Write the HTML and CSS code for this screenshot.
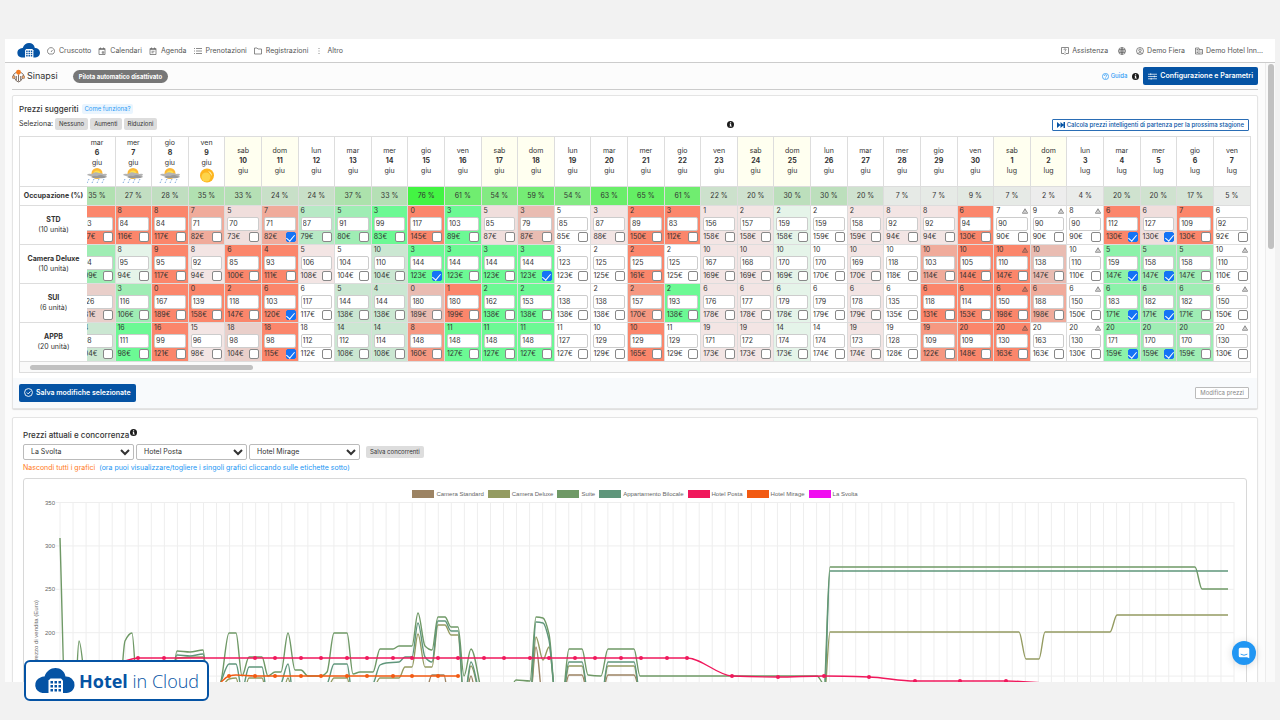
FILE: index.html
```html
<!DOCTYPE html>
<html lang="it">
<head>
  <meta charset="UTF-8">
  <meta name="viewport" content="width=device-width, initial-scale=1.0">
  <title>Sinapsi - Hotel in Cloud</title>
  <link rel="stylesheet" href="styles.css">
</head>
<body>

<svg class="defs" width="0" height="0" aria-hidden="true">
  <symbol id="cloud" viewBox="0 0 40 26">
    <path fill="#0553a4" d="M8 25a8 8 0 0 1-2-15.500 6 6 0 0 1 4-1C12 3 16 0 21 0s9 3 10 8.500a8.500 8.500 0 0 1 9 8.500c0 4-3 8-8 8z"/>
    <path fill="#fff" d="M14 26V12.500l2-2h10.500l2 2V26z"/>
    <path fill="#0553a4" d="M16 13h2.500v2.500H16zM20 13h2.500v2.500H20zM24 13h2.500v2.500H24zM16 17h2.500v2.500H16zM20 17h2.500v2.500H20zM24 17h2.500v2.500H24zM16 21h2.500v2.500H16zM20 21h2.500v2.500H20zM24 21h2.500v2.500H24z"/>
  </symbol>
  <symbol id="info" viewBox="0 0 16 16">
    <circle cx="8" cy="8" r="8" fill="#1b1b1b"/>
    <path fill="#fff" d="M7 3h2.500v2H7zM6 6.500h3.500V11H11v1.500H6V11h1V8H6z"/>
  </symbol>
  <symbol id="help" viewBox="0 0 16 16">
    <circle cx="8" cy="8" r="7" fill="none" stroke="currentColor" stroke-width="1.800"/>
    <path d="M5.500 6.500a2.500 2.500 0 1 1 3.500 2.200q-1 .5-1 1.300M8 11.500v1.500" fill="none" stroke="currentColor" stroke-width="1.800"/>
  </symbol>
  <symbol id="rain" viewBox="0 0 22 16">
    <circle cx="11" cy="5.500" r="5.500" fill="#fdb937"/>
    <circle cx="11" cy="6" r="3.500" fill="#fde04c"/>
    <path fill="#b4b4b4" d="M1 7q1-2 5-1 3-3 7-1 3 0 4 1 4-1 4 1-2 2-7 1-7 2-13-1z"/>
    <path fill="#999" d="M5 9q3-2 6-1 4-2 7 0 3 0 3 1-4 2-8 1-5 1-8-1z"/>
    <path stroke="#7ba7dc" stroke-width="1" stroke-dasharray="1.500 1.500" d="M3 11l-2 4M8 11l-2 4M13 11l-2 4M18 11l-2 4"/>
  </symbol>
  <symbol id="sun" viewBox="0 0 22 16">
    <circle cx="11" cy="7.500" r="7" fill="#fdb51f"/>
    <circle cx="10" cy="9" r="4.500" fill="#fdd44a"/>
    <path fill="#fff3b0" d="M12 3q4 1 4 5-2-3-4-5z"/>
  </symbol>
</svg>

<div class="app">
  <nav class="navbar">
    <svg class="brand"><use href="#cloud"/></svg>
    <a href="#"><svg viewBox="0 0 16 16"><path d="M4 14a7 7 0 1 1 8 0zM8 10l3-4"/></svg>Cruscotto</a>
    <a href="#"><svg viewBox="0 0 16 16"><path d="M2 3h12v12H2zM2 5h12M5 1v3M11 1v3M8.500 9.500h3v3h-3z"/></svg>Calendari</a>
    <a href="#"><svg viewBox="0 0 16 16"><path d="M2 3h12v12H2zM2 5h12M5 1v3M11 1v3M5 8.500h6M5 11.500h4"/></svg>Agenda</a>
    <a href="#"><svg viewBox="0 0 16 16"><path d="M0 3h2M4 3h12M0 8h2M4 8h12M0 13h2M4 13h12"/></svg>Prenotazioni</a>
    <a href="#"><svg viewBox="0 0 16 16"><path d="M1 14V2h5l2 2h7v10z"/></svg>Registrazioni</a>
    <a href="#"><svg viewBox="0 0 16 16"><path d="M8 2v2M8 7v2M8 12v2"/></svg>Altro</a>
    <a href="#" class="push"><svg viewBox="0 0 16 16"><path d="M1 1h14v12h-5l-2 2-2-2H1zM6 5.500q0-2 2-2t2 2q0 1-2 2V9M8 10v1.500"/></svg>Assistenza</a>
    <a href="#" aria-label="Lingua"><svg viewBox="0 0 16 16"><path d="M8 1a7 7 0 1 0 0 14A7 7 0 1 0 8 1zM1 8h14M2 5h12M2 11h12M8 1q-4 7 0 14M8 1q4 7 0 14"/></svg></a>
    <a href="#"><svg viewBox="0 0 16 16"><path d="M8 1a7 7 0 1 0 0 14A7 7 0 1 0 8 1zM8 4a2.500 2.500 0 1 0 0 5 2.500 2.500 0 1 0 0-5zM3 13q5-4 10 0"/></svg>Demo Fiera</a>
    <a href="#"><svg viewBox="0 0 16 16"><path d="M1 2h7v12H1zM8 5h7v9H8M3 5h3M3 8h3M3 11h3M11 8h2M11 11h2"/></svg>Demo Hotel Inn...</a>
  </nav>

  <div class="viewport">
    <main class="content">
      <header class="page-head">
        <svg class="sinapsi" viewBox="0 0 24 24"><g fill="none" stroke="#6b5a50" stroke-width="1.600"><path d="M12 9v13M8 5L3 9v3M16 5l5 4v3M4 15l4 6 4 2 4-2 4-6M8 12v8M16 12v8"/></g><circle cx="12" cy="5" r="4.500" fill="#f47b20"/><circle cx="3" cy="14" r="2.800" fill="#f6a96c" stroke="#6b5a50"/><circle cx="21" cy="14" r="2.800" fill="#f6a96c" stroke="#6b5a50"/></svg>
        <h1>Sinapsi</h1>
        <span class="pill">Pilota automatico disattivato</span>
        <a href="#" class="guide"><svg><use href="#help"/></svg>Guida</a>
        <svg class="info"><use href="#info"/></svg>
        <button class="btn" type="button"><svg viewBox="0 0 20 16"><path d="M0 3h20M0 8h20M0 13h20M6 1v4M14 6v4M7 11v4"/></svg>Configurazione e Parametri</button>
      </header>

      <section class="card">
        <div class="card-body">
          <div class="title-row">
            <h2>Prezzi suggeriti</h2>
            <a href="#" class="how">Come funziona?</a>
          </div>
          <div class="select-row">
            <span>Seleziona:</span>
            <button class="chip" type="button">Nessuno</button>
            <button class="chip" type="button">Aumenti</button>
            <button class="chip" type="button">Riduzioni</button>
            <svg class="info season-info"><use href="#info"/></svg>
            <button class="btn-outline season" type="button"><svg viewBox="0 0 16 12"><path d="M0 0l7 6-7 6zM7 0l7 6-7 6zM13 0h3v12h-3z"/></svg>Calcola prezzi intelligenti di partenza per la prossima stagione</button>
          </div>
          <div class="table-box">
            <table class="prices" id="prices"></table>
            <div class="hbar"><div class="hbar-thumb"></div></div>
          </div>
        </div>
        <footer class="card-foot">
          <button class="btn" type="button"><svg viewBox="0 0 16 16"><path d="M8 1a7 7 0 1 0 0 14A7 7 0 1 0 8 1zM5 8l2.500 2.500L11.500 6"/></svg>Salva modifiche selezionate</button>
          <button class="btn-outline muted" type="button">Modifica prezzi</button>
        </footer>
      </section>

      <section class="card compare">
        <h2>Prezzi attuali e concorrenza<svg class="info"><use href="#info"/></svg></h2>
        <div class="rivals">
          <select aria-label="Concorrente 1"><option>La Svolta</option></select>
          <select aria-label="Concorrente 2"><option>Hotel Posta</option></select>
          <select aria-label="Concorrente 3"><option>Hotel Mirage</option></select>
          <button class="chip" type="button">Salva concorrenti</button>
        </div>
        <p class="hint"><a href="#">Nascondi tutti i grafici</a><span>(ora puoi visualizzare/togliere i singoli grafici cliccando sulle etichette sotto)</span></p>
        <div class="chart">
          <div class="legend" id="legend"></div>
          <svg id="plot" viewBox="24 499 1222 190"></svg>
        </div>
      </section>
    </main>
    <div class="vbar"><div class="vbar-thumb"></div></div>
  </div>

  <button class="chat" type="button" aria-label="Chat"><svg viewBox="0 0 16 16"><path fill="#fff" d="M3 1h10q2 0 2 2v12l-3-1.500H3q-2 0-2-2V3q0-2 2-2z"/><path fill="none" stroke="#2196f3" stroke-width="1.200" d="M3.500 9.500q4.500 3 9 0"/></svg></button>
</div>

<div class="badge"><svg><use href="#cloud"/></svg><span><b>Hotel</b> in Cloud</span></div>

<script src="script.js"></script>
</body>
</html>
```

FILE: styles.css
```css
* {
  box-sizing: border-box;
}
body {
  display: flex;
  height: 100vh;
  margin: 0;
  padding: 39px 5px 38px;
  background: #f2f2f2;
  color: #333;
  font-family: Inter, "Liberation Sans", sans-serif;
  font-size: 7px;
  line-height: 10px;
}
.defs {
  position: absolute;
}
a {
  color: inherit;
  text-decoration: none;
}
button, input, select {
  font: inherit;
  color: inherit;
}
h1, h2 {
  margin: 0;
  font-size: 8px;
  font-weight: 500;
  line-height: 12px;
}
.app {
  position: relative;
  display: flex;
  flex: 1;
  flex-direction: column;
  min-width: 0;
  background: #fcfcfc;
}

/* top bar */
.navbar {
  display: flex;
  align-items: center;
  gap: 7px;
  height: 24px;
  padding: 0 12px;
  background: #fff;
  border-bottom: 1px solid #ccc;
  color: #555;
}
.navbar a {
  display: flex;
  align-items: center;
  gap: 4px;
}
.navbar a svg {
  width: 8px;
  height: 8px;
  fill: none;
  stroke: #666;
  stroke-width: 1.5;
}
.navbar .brand {
  width: 23px;
  height: 15px;
}
.navbar .push {
  margin-left: auto;
}
.navbar .push, .navbar .push ~ a {
  gap: 3px;
}
.navbar .push ~ a {
  margin-left: 3px;
}

/* scrolling area */
.viewport {
  display: flex;
  flex: 1;
  min-height: 0;
}
.content {
  flex: 1;
  min-width: 0;
  padding: 0 7px;
  overflow: hidden;
}
.vbar {
  width: 10px;
  padding: 1px 2px;
  background: #fafafa;
  border-left: 1px solid #ececec;
}
.vbar-thumb {
  width: 6px;
  height: 30%;
  background: #c1c1c1;
  border-radius: 3px;
}
.page-head {
  display: flex;
  align-items: center;
  height: 27px;
  margin-bottom: 5px;
  border-bottom: 1px solid #ccc;
}
.sinapsi {
  width: 13px;
  height: 14px;
  margin-right: 2px;
}
.page-head h1 {
  font-size: 9px;
  font-weight: 400;
}
.pill {
  margin-left: 15px;
  padding: 1px 6px;
  border-radius: 7px;
  background: #777;
  color: #fff;
  font-size: 6px;
  font-weight: 700;
  line-height: 11px;
}
.guide {
  display: flex;
  align-items: center;
  gap: 2px;
  margin: 0 5px 0 auto;
  color: #2f9bf5;
  font-size: 6px;
  font-weight: 500;
}
.guide svg, .info {
  width: 7px;
  height: 7px;
}
.page-head .info {
  margin-right: 4px;
}
.btn {
  display: flex;
  align-items: center;
  gap: 3px;
  height: 18px;
  padding: 0 5px;
  border: 0;
  border-radius: 2px;
  background: #0553a4;
  color: #fff;
  font-weight: 600;
}
.btn svg {
  width: 9px;
  height: 9px;
  fill: none;
  stroke: #fff;
  stroke-width: 1.6;
}

/* cards */
.card {
  margin-bottom: 8px;
  background: #fff;
  border: 1px solid #e4e4e4;
  border-radius: 2px;
  box-shadow: 0 1px 1px #ddd;
}
.card-body {
  padding: 6px 6px 5px;
}
.title-row {
  display: flex;
  align-items: center;
  gap: 4px;
  height: 14px;
}
.how {
  padding: 0 2px;
  border-radius: 2px;
  background: #eaf5fe;
  color: #2f9bf5;
  font-size: 6px;
}
.select-row {
  display: flex;
  align-items: center;
  gap: 2px;
  height: 16px;
  margin-bottom: 4px;
}
.chip {
  height: 12px;
  padding: 0 4px;
  border: 0;
  border-radius: 2px;
  background: #ddd;
  font-size: 6px;
}
.season-info {
  margin-left: auto;
}
.btn-outline {
  display: flex;
  align-items: center;
  gap: 2px;
  height: 12px;
  padding: 0 4px;
  border: 1px solid #2a6db5;
  border-radius: 1px;
  background: #fff;
  color: #0553a4;
  font-size: 6px;
}
.btn-outline svg {
  width: 8px;
  height: 6px;
  fill: #0553a4;
}
.season {
  margin: 2px 2px 0 316px;
  font-weight: 500;
}
.card-foot {
  display: flex;
  align-items: center;
  justify-content: space-between;
  height: 30px;
  padding: 0 8px 0 6px;
  background: #f8fafc;
}
.btn-outline.muted {
  border-color: #bbb;
  color: #888;
}

/* price table */
.table-box {
  border: 1px solid #ddd;
}
.prices {
  width: 100%;
  border-collapse: collapse;
  table-layout: fixed;
  text-align: center;
}
.prices th, .prices td {
  padding: 0;
  border: 1px solid #ddd;
  border-width: 0 0 1px 1px;
  font-weight: 400;
  overflow: hidden;
}
.prices .label {
  width: 67px;
  border-left: 0;
}
.prices .label b {
  display: block;
}
.prices .cut {
  width: 28px;
  border-left: 0;
}
/* first day is partly scrolled under the labels */
.cut > div {
  width: 36px;
  margin-left: -8px;
}
.prices thead th {
  height: 49px;
}
.prices thead b, .prices thead span {
  display: block;
}
.prices thead svg {
  display: block;
  width: 22px;
  height: 16px;
  margin: 0 auto;
}
.weekend {
  background: #fffff0;
}
.occ th, .occ td {
  height: 19px;
}
.day {
  padding: 0 2px;
  text-align: left;
}
.day label, .day .count {
  display: flex;
  align-items: center;
  justify-content: space-between;
  height: 13px;
}
.day .count {
  height: 11px;
}
.day .count svg {
  width: 6px;
  height: 6px;
  fill: none;
  stroke: #444;
  stroke-width: 1.6;
}
.day input {
  display: block;
  margin: 0;
  border: 1px solid #ccc;
  background: #fff;
}
.day input[type="text"] {
  width: 100%;
  height: 14px;
  padding: 0 0 0 1px;
  border-radius: 2px;
}
.day input[type="checkbox"] {
  width: 10px;
  height: 10px;
  border: 1px solid #888;
  border-radius: 2px;
  appearance: none;
}
.day input[type="checkbox"]:checked {
  border-color: #1473f5;
  background: #1473f5;
}
.day input[type="checkbox"]:checked::after {
  content: "";
  display: block;
  width: 4px;
  height: 7px;
  margin: 0 auto;
  border: solid #fff;
  border-width: 0 1px 1px 0;
  transform: rotate(40deg);
}
.hbar {
  height: 10px;
  padding: 3px 10px;
  background: #fafafa;
}
.hbar-thumb {
  width: 18.4%;
  height: 5px;
  background: #c1c1c1;
  border-radius: 3px;
}

/* competitors */
.compare {
  padding: 11px 10px;
}
.compare h2 {
  display: flex;
  gap: 1px;
}
.rivals {
  display: flex;
  align-items: center;
  gap: 2px;
  margin: 3px 0;
}
.rivals select {
  width: 111px;
  height: 16px;
  padding: 0 3px;
  border: 1px solid #bbb;
  border-radius: 2px;
  background: #fff;
}
.rivals .chip {
  margin-left: 4px;
}
.hint {
  display: flex;
  gap: 4px;
  margin: 0 0 5px;
  color: #2196f3;
}
.hint a {
  color: #ff7a1a;
}
.chart {
  padding-top: 10px;
  border: 1px solid #d8d8d8;
  border-radius: 3px;
}
.legend {
  display: flex;
  justify-content: center;
  gap: 4px;
  height: 10px;
  font-family: "Liberation Sans", sans-serif;
  font-size: 6px;
  color: #666;
}
.legend span {
  display: flex;
  align-items: center;
  gap: 2px;
}
.legend i {
  width: 22px;
  height: 8px;
}
#plot {
  display: block;
  width: 100%;
}
#plot text {
  fill: #666;
  font: 6px "Liberation Sans", sans-serif;
  text-anchor: end;
}
.grid {
  stroke: #eee;
}
.series {
  fill: none;
  stroke-width: 1.4;
}

/* floating items */
.chat {
  position: absolute;
  right: 19px;
  bottom: 17px;
  width: 24px;
  height: 24px;
  padding: 6px;
  border: 0;
  border-radius: 50%;
  background: #2196f3;
  box-shadow: 0 1px 8px rgba(0, 0, 0, 0.15);
}
.chat svg {
  display: block;
}
.badge {
  position: absolute;
  left: 24px;
  bottom: 19px;
  display: flex;
  align-items: center;
  gap: 4px;
  height: 41px;
  padding: 0 8px;
  background: #fff;
  border: 2px solid #0553a4;
  border-radius: 6px;
  color: #0553a4;
  font-family: "Open Sans", "Noto Sans", sans-serif;
  font-size: 18px;
  font-weight: 300;
  line-height: 24px;
}
.badge b {
  font-weight: 700;
}
.badge svg {
  width: 41px;
  height: 26px;
}
```

FILE: script.js
```js
var weekdays = ['lun', 'mar', 'mer', 'gio', 'ven', 'sab', 'dom'];
var weather = ['rain', 'rain', 'rain', 'sun'];
var occupancy = [35, 27, 28, 35, 33, 24, 24, 37, 33, 76, 61, 54, 59, 54, 63, 65, 61, 22, 20, 30, 30, 20, 7, 7, 9, 7, 2, 4, 20, 20, 17, 5];

// cell background: R..l increases, G..n reductions, W unchanged
var shades = {
  R: '#fb866b', r: '#f69881', P: '#f0ab9b', p: '#e9bcb2', L: '#e9cfca', q: '#f0dedc', l: '#f3e5e4',
  G: '#6cf994', g: '#8cf2aa', H: '#9fedb4', M: '#b7e9c5', m: '#cbe7d2', n: '#e5f4e9', W: '#fff'
};

// rooms left, price, suggested price, shade, * selected, ! warning
var rooms = [
  ['STD', 10, '9 93 117 R,8 84 116 R,8 84 117 R,7 71 82 P,5 70 73 q,7 71 82 P*,6 87 79 M,5 91 80 H,3 99 83 G,0 117 145 R,3 103 89 G,5 85 87 q,3 79 87 p,5 85 85 W,3 87 88 l,2 89 150 R,3 83 112 R,1 156 158 l,2 157 158 l,2 159 158 n,2 159 159 W,2 158 159 l,8 92 94 l,8 92 94 l,6 94 130 R,7 90 90 W!,9 90 90 W!,8 90 90 W!,6 112 130 R*,6 127 130 q*,7 109 130 R,6 92 92 W'],
  ['Camera Deluxe', 10, '7 94 109 H,8 95 94 n,9 95 117 R,8 92 94 l,6 85 100 R,4 93 111 R,5 106 108 l,5 104 104 W,10 110 104 m,3 144 123 G*,3 144 123 G,3 144 123 G,3 144 123 G*,3 123 123 W,2 125 125 W,2 125 161 R,2 125 125 W,10 167 169 l,10 168 169 l,10 170 169 n,10 170 170 W,10 169 170 l,10 118 118 W,10 103 114 P,10 105 144 R,10 110 147 R!,10 138 147 p,10 110 110 W!,5 159 147 g*,5 158 147 H*,5 158 147 H,10 110 110 W!'],
  ['SUI', 6, '4 126 131 L,3 116 106 H,0 167 189 R,0 139 158 R,2 118 147 R,6 103 120 R*,6 117 117 W,5 144 138 m,4 144 138 m,0 180 189 p,1 180 199 R,2 162 138 G,2 153 138 G,2 138 138 W,2 138 138 W,2 157 170 r,2 193 138 G,6 176 178 l,6 177 178 l,6 179 178 n,6 179 179 W,6 178 179 l,6 135 135 W,6 118 131 R,6 114 153 R,6 150 198 R!,6 188 198 P,6 150 150 W!,6 183 171 g*,6 182 171 H*,6 182 171 H,6 150 150 W!'],
  ['APPB', 20, '14 98 104 m,16 111 98 G,16 99 121 R,15 96 98 l,18 98 104 L,18 98 115 R*,18 112 112 W,14 112 108 m,14 114 108 m,8 148 160 r,11 148 127 G,11 148 127 G,11 148 127 G,11 127 127 W,10 129 129 W,10 129 165 R,11 129 129 W,19 171 173 l,19 172 173 l,14 174 173 n,14 174 174 W,19 173 174 l,19 128 128 W,19 109 122 r,20 109 148 R,20 130 163 R!,20 163 163 W,20 130 130 W!,20 171 159 g*,20 170 159 H*,20 170 159 H,20 130 130 W!']
];

function occColor(v) {
  var rb = Math.round(240 - 1.4 * v - 0.0115 * v * v);
  var g = Math.round(Math.max(238 - 0.6 * v, 209 + 0.46 * v));
  return 'rgb(' + rb + ',' + g + ',' + rb + ')';
}

function buildTable() {
  var html = '<thead><tr><th class="label"></th>';
  occupancy.forEach(function(v, i) {
    var day = i < 25 ? i + 6 : i - 24;
    var wd = weekdays[(i + 1) % 7];
    var cls = (i === 0 ? 'cut' : '') + (wd === 'sab' || wd === 'dom' ? 'weekend' : '');
    html += '<th class="' + cls + '"><div><span>' + wd + '</span><b>' + day + '</b><span>' + (i < 25 ? 'giu' : 'lug') + '</span>' +
      (weather[i] ? '<svg><use href="#' + weather[i] + '"/></svg>' : '') + '</div></th>';
  });
  html += '</tr></thead><tbody><tr class="occ"><th class="label"><b>Occupazione (%)</b></th>';
  occupancy.forEach(function(v, i) {
    html += '<td class="' + (i === 0 ? 'cut' : '') + '" style="background:' + occColor(v) + '"><div>' + v + ' %</div></td>';
  });
  html += '</tr>';
  rooms.forEach(function(room) {
    html += '<tr><th class="label"><b>' + room[0] + '</b>(' + room[1] + ' unità)</th>';
    room[2].split(',').forEach(function(cell, i) {
      var c = cell.split(' ');
      html += '<td class="' + (i === 0 ? 'cut' : '') + '" style="background:' + shades[c[3][0]] + '"><div class="day">' +
        '<div class="count">' + c[0] + (c[3][1] === '!' ? '<svg viewBox="0 0 16 16"><path d="M8 2l7 12H1zM8 6v4M8 11v2"/></svg>' : '') + '</div>' +
        '<input type="text" aria-label="Prezzo ' + room[0] + '" value="' + c[1] + '">' +
        '<label>' + c[2] + '€<input type="checkbox"' + (c[3][1] === '*' ? ' checked' : '') + '></label></div></td>';
    });
    html += '</tr>';
  });
  document.getElementById('prices').innerHTML = html + '</tbody>';
}

var series = [
  { name: 'Camera Standard', color: '#9c8363', points: [[425,700],[432,675],[444,675],[449,700],[465,700],[471,676],[477,700],[530,700],[536,647],[543,700],[562,700],[569,675],[582,675],[589,700],[601,700],[608,675],[634,675],[641,700]] },
  { name: 'Camera Deluxe', color: '#949b61', points: [[170,700],[177,658],[203,657],[210,700],[220,690],[229,679],[236,678],[242,700],[249,678],[262,678],[268,700],[281,700],[288,678],[294,700],[327,690],[334,678],[347,678],[353,700],[373,690],[380,678],[399,678],[405,667],[412,667],[418,634],[425,667],[432,667],[438,625],[445,625],[451,635],[458,635],[464,700],[471,666],[482,700],[530,700],[536,637],[543,660],[549,647],[556,700],[562,700],[569,666],[582,666],[589,700],[601,700],[608,666],[634,666],[641,700],[824,700],[830,632],[1019,632],[1026,659],[1039,659],[1045,632],[1110,632],[1117,615],[1228,615]] },
  { name: 'Suite', color: '#6f9966', points: [[60,538],[66,720],[75,700],[79,641],[88,700],[119,700],[125,641],[132,633],[138,700],[170,700],[177,651],[190,652],[203,650],[208,690],[220,684],[229,633],[236,633],[242,676],[249,657],[262,657],[268,676],[275,672],[281,672],[288,633],[295,670],[301,670],[308,676],[321,676],[327,672],[334,633],[347,633],[353,674],[360,672],[373,672],[380,649],[393,649],[399,646],[412,646],[418,613],[425,646],[432,650],[438,617],[445,617],[451,627],[458,627],[464,676],[471,649],[485,700],[510,690],[516,680],[530,681],[536,617],[543,618],[549,634],[556,700],[562,700],[569,649],[582,649],[588,675],[601,676],[608,649],[634,649],[640,676],[817,676],[824,684],[830,567],[1195,567],[1202,589],[1228,589]] },
  { name: 'Appartamento Bilocale', color: '#5f967b', points: [[170,700],[177,655],[190,656],[203,654],[210,700],[220,684],[229,664],[236,664],[242,690],[249,667],[262,667],[268,700],[281,684],[288,664],[294,700],[327,684],[334,664],[347,664],[353,700],[373,684],[380,665],[386,663],[399,662],[405,657],[412,657],[418,623],[425,657],[432,662],[438,621],[445,621],[451,631],[458,631],[464,700],[471,662],[482,700],[530,700],[536,622],[543,623],[549,640],[556,700],[562,700],[569,662],[582,662],[589,700],[601,700],[608,662],[634,662],[641,700],[824,700],[830,571],[1228,571]] },
  { name: 'Hotel Posta', color: '#f0185c', points: [[125,661],[138,658],[667,658],[687,658],[732,676],[778,677],[824,676],[869,677],[915,681],[1006,681],[1045,683]], dots: [138, 164, 255, 275, 301, 321, 347, 367, 393, 412, 438, 458, 484, 504, 530, 549, 575, 595, 621, 641, 667, 687, 732, 778, 824, 869, 915, 960, 1006] },
  { name: 'Hotel Mirage', color: '#f25a12', points: [[221,682],[229,676],[236,675],[255,676],[458,676]], dots: [229, 255, 275, 301, 321, 347, 367, 393, 412, 438, 458] },
  { name: 'La Svolta', color: '#f00cf0', points: [] }
];

// monotone cubic through the points
function curve(p) {
  if (!p.length) return '';
  var d = [], m = [], i;
  for (i = 0; i < p.length - 1; i++) d.push((p[i + 1][1] - p[i][1]) / (p[i + 1][0] - p[i][0]));
  for (i = 0; i < p.length; i++) {
    var a = d[i - 1], b = d[i];
    m.push(a === undefined ? b : b === undefined ? a : a * b <= 0 ? 0 : 2 * a * b / (a + b));
  }
  var path = 'M' + p[0];
  for (i = 0; i < p.length - 1; i++) {
    var h = (p[i + 1][0] - p[i][0]) / 3;
    path += 'C' + [p[i][0] + h, p[i][1] + m[i] * h, p[i + 1][0] - h, p[i + 1][1] - m[i + 1] * h, p[i + 1][0], p[i + 1][1]];
  }
  return path;
}

function yAt(points, x) {
  for (var i = 1; i < points.length; i++) {
    var a = points[i - 1], b = points[i];
    if (x <= b[0]) return a[1] + (b[1] - a[1]) * (x - a[0]) / (b[0] - a[0]);
  }
}

function buildChart() {
  var svg = '', i;
  for (i = 0; i <= 90; i++) {
    var x = 60 + i * 1174 / 90;
    svg += '<path class="grid" d="M' + x + ' 502V700"/>';
  }
  for (i = 0; i < 5; i++) {
    var y = 502.5 + i * 43.4;
    svg += '<path class="grid" d="M56 ' + y + 'H1234"/>';
    svg += '<text x="55" y="' + (y + 2) + '">' + (350 - i * 50) + '</text>';
  }
  svg += '<text transform="translate(38 600) rotate(-90)">Prezzo di vendita (Euro)</text>';
  series.forEach(function(s) {
    svg += '<path class="series" stroke="' + s.color + '" d="' + curve(s.points) + '"/>';
    (s.dots || []).forEach(function(x) {
      svg += '<circle cx="' + x + '" cy="' + yAt(s.points, x) + '" r="2" fill="' + s.color + '"/>';
    });
    document.getElementById('legend').innerHTML += '<span><i style="background:' + s.color + '"></i>' + s.name + '</span>';
  });
  document.getElementById('plot').innerHTML = svg;
}

buildTable();
buildChart();
```
